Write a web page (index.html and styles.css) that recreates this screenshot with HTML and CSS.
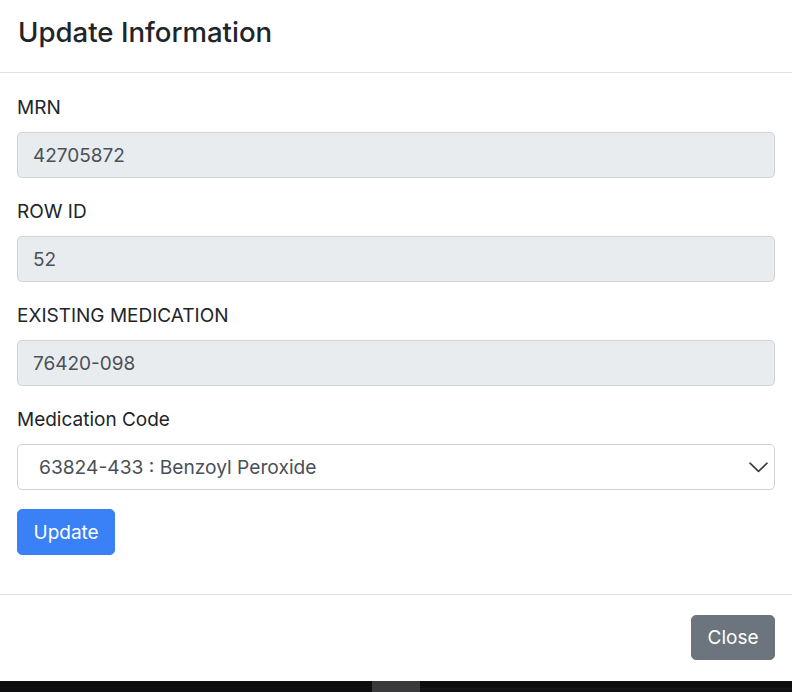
FILE: index.html
```html
<!DOCTYPE html>
<html lang="en">
<head>
<meta charset="utf-8">
<title>Update Information</title>
<link rel="stylesheet" href="styles.css">
</head>
<body>
<div class="modal">
  <div class="modal-header">
    <h4 class="modal-title">Update Information</h4>
  </div>
  <div class="modal-body">
    <div class="group">
      <label class="label">MRN</label>
      <div class="control disabled">42705872</div>
    </div>
    <div class="group">
      <label class="label">ROW ID</label>
      <div class="control disabled">52</div>
    </div>
    <div class="group">
      <label class="label">EXISTING MEDICATION</label>
      <div class="control disabled">76420-098</div>
    </div>
    <div class="group">
      <label class="label">Medication Code</label>
      <div class="control select">
        <span>63824-433 : Benzoyl Peroxide</span>
        <svg class="chevron" width="19" height="11" viewBox="0 0 19 11" aria-hidden="true"><path d="M1 1.2 L9.5 9.4 L18 1.2" fill="none" stroke="#343a40" stroke-width="1.6" stroke-linecap="round" stroke-linejoin="round"/></svg>
      </div>
    </div>
    <div class="group">
      <button class="btn btn-primary">Update</button>
    </div>
  </div>
  <div class="modal-footer">
    <button class="btn btn-secondary">Close</button>
  </div>
</div>
<div class="backdrop-strip">
  <div class="strip-left"></div>
  <div class="strip-thumb"></div>
  <div class="strip-right"></div>
</div>
</body>
</html>
```
FILE: styles.css
```css
* { box-sizing: border-box; }
html, body { margin: 0; padding: 0; }
body {
  width: 792px;
  height: 692px;
  overflow: hidden;
  background: #ffffff;
  font-family: Inter, "Noto Sans", "Liberation Sans", sans-serif;
  color: #212529;
}
.modal {
  width: 792px;
  background: #fff;
  display: flex;
  flex-direction: column;
}
.modal-header {
  height: 73px;
  border-bottom: 1px solid #dee2e6;
  padding: 0 17px;
  display: flex;
  align-items: center;
}
.modal-title {
  margin: 0 0 7px 1px;
  font-size: 27.6px;
  font-weight: 500;
  line-height: 1.2;
  color: #212529;
}
.modal-body {
  padding: 20px 17px 0 17px;
  height: 521px;
}
.group { margin-bottom: 19px; }
.label {
  display: block;
  font-size: 19px;
  line-height: 29px;
  margin-bottom: 10px;
  color: #212529;
}
.control {
  height: 46px;
  border: 1px solid #ced4da;
  border-radius: 5px;
  padding: 0 15px;
  font-size: 19px;
  color: #495057;
  display: flex;
  align-items: center;
}
.control.disabled { background: #e9ecef; }
.control.select {
  background: #fff;
  padding: 0 6px 0 21px;
  font-size: 19.2px;
  justify-content: space-between;
}
.chevron { display: block; }
.btn {
  font-family: inherit;
  font-size: 19px;
  line-height: 1;
  border: 1px solid transparent;
  border-radius: 5px;
  color: #fff;
  padding: 0 15.5px;
  cursor: pointer;
}
.btn-primary {
  height: 46px;
  background: #3a80f6;
  border-color: #3a80f6;
}
.btn-secondary {
  height: 45px;
  background: #6c757d;
  border-color: #6c757d;
}
.modal-footer {
  border-top: 1px solid #dee2e6;
  padding: 20px 17px 21px 17px;
  display: flex;
  justify-content: flex-end;
}
.backdrop-strip {
  height: 11px;
  display: flex;
  background: #0e0e11;
}
.strip-left { width: 372px; }
.strip-thumb { width: 48px; background: #3a3a3c; }
.strip-right { flex: 1; border-bottom: 2px solid #151518; margin-bottom: 2px; }
```
